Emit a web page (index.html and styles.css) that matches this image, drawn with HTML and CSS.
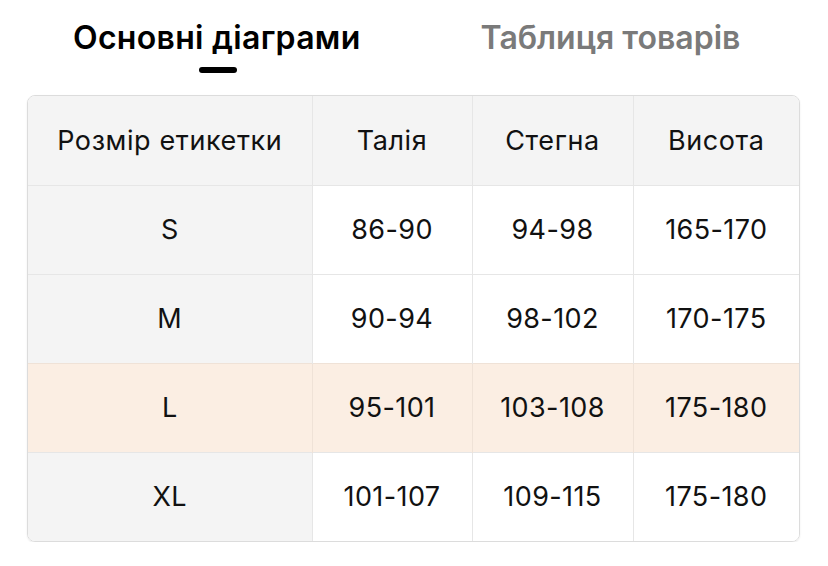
FILE: index.html
```html
<!DOCTYPE html>
<html lang="uk">
<head>
<meta charset="utf-8">
<link rel="stylesheet" href="styles.css">
</head>
<body>
<div class="page">
  <nav class="tabs">
    <div class="tab active">Основні діаграми<span class="indicator"></span></div>
    <div class="tab">Таблиця товарів</div>
  </nav>
  <div class="card">
    <table class="sizes">
      <thead>
        <tr><th class="first">Розмір етикетки</th><th>Талія</th><th>Стегна</th><th>Висота</th></tr>
      </thead>
      <tbody>
        <tr><td class="first">S</td><td>86-90</td><td>94-98</td><td>165-170</td></tr>
        <tr><td class="first">M</td><td>90-94</td><td>98-102</td><td>170-175</td></tr>
        <tr class="hl"><td class="first">L</td><td>95-101</td><td>103-108</td><td>175-180</td></tr>
        <tr><td class="first">XL</td><td>101-107</td><td>109-115</td><td>175-180</td></tr>
      </tbody>
    </table>
  </div>
</div>
</body>
</html>
```
FILE: styles.css
```css
* { box-sizing: border-box; }
html, body { margin: 0; padding: 0; background: #fff; }
body { font-family: "Inter", "Liberation Sans", sans-serif; color: #111; }
.page { padding: 18px 28px 0 27px; width: 828px; }
.tabs { display: flex; height: 77px; }
.tab {
  position: relative;
  font-size: 32px;
  font-weight: 600;
  letter-spacing: 0;
  color: #7a7a7a;
  line-height: 40px;
}
.tab.active { color: #000; margin-left: 46px; margin-right: 120px; letter-spacing: 0.3px; }
.indicator {
  position: absolute;
  left: 126px;
  top: 49px;
  width: 38px;
  height: 6px;
  border-radius: 3px;
  background: #000;
}
.card {
  width: 773px;
  border: 1px solid #dcdcdc;
  border-radius: 8px;
  overflow: hidden;
  box-shadow: 0 1px 2px rgba(0,0,0,0.08);
}
.sizes { width: 100%; border-collapse: collapse; table-layout: fixed; }
.sizes th, .sizes td {
  height: 89px;
  text-align: center;
  vertical-align: middle;
  border-left: 1px solid #e6e6e6;
  border-top: 1px solid #e6e6e6;
  padding: 0;
  color: #111;
}
.sizes th { font-size: 27px; font-weight: 400; letter-spacing: 0.6px; background: #f4f4f4; }
.sizes td { font-size: 27px; font-weight: 400; letter-spacing: 0.4px; background: #fff; }
.sizes tr:first-child th { border-top: none; }
.sizes .first { border-left: none; width: 284px; background: #f4f4f4; }
.sizes th:nth-child(2) { width: 160px; }
.sizes th:nth-child(3) { width: 161px; }
.sizes tr.hl td { background: #fbeee3; border-color: #efe2d7; }
```
